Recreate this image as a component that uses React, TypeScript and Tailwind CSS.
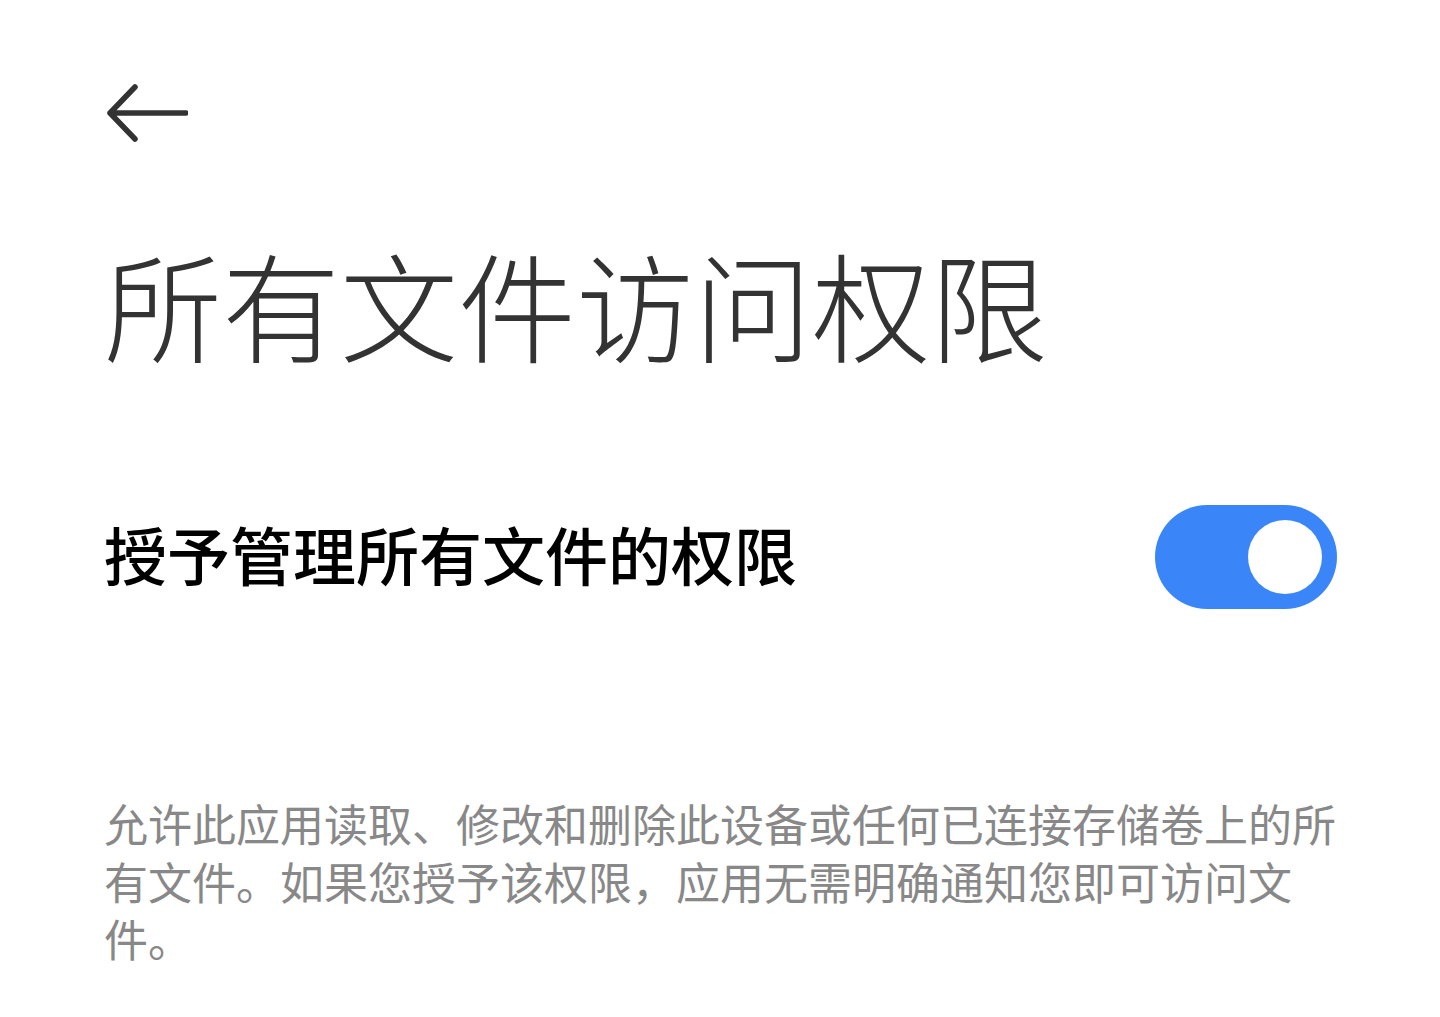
import { useState } from "react";

const FONT = '"Noto Sans CJK SC", "Noto Sans", sans-serif';

const DESCRIPTION =
  "允许此应用读取、修改和删除此设备或任何已连接存储卷上的所有文件。如果您授予该权限，应用无需明确通知您即可访问文件。";

function BackArrow() {
  return (
    <svg width="84" height="60" viewBox="0 0 84 60" fill="none">
      <path
        d="M31 4 L6 30 L31 56 M6 30 H82"
        stroke="#333333"
        strokeWidth="5.5"
        strokeLinecap="round"
        strokeLinejoin="round"
      />
    </svg>
  );
}

function Toggle({ on, onChange }: { on: boolean; onChange: () => void }) {
  return (
    <button
      type="button"
      onClick={onChange}
      className={`flex h-[104px] w-[182px] shrink-0 items-center rounded-full px-[15px] ${
        on ? "justify-end bg-[#3a86f8]" : "justify-start bg-[#d6d6d6]"
      }`}
    >
      <span className="block h-[74px] w-[74px] rounded-full bg-white" />
    </button>
  );
}

export default function App() {
  const [granted, setGranted] = useState(true);

  return (
    <div
      className="min-h-[1017px] w-[1440px] bg-white pl-[104px] pr-[103px]"
      style={{ fontFamily: FONT }}
    >
      <div className="pt-[83px]">
        <BackArrow />
      </div>

      <h1 className="mt-[101px] text-[118px] font-light leading-none text-[#333333]">
        所有文件访问权限
      </h1>

      <div className="mt-[143px] flex items-center justify-between">
        <span className="pb-[10px] text-[63px] font-medium leading-none text-black">
          授予管理所有文件的权限
        </span>
        <Toggle on={granted} onChange={() => setGranted((v) => !v)} />
      </div>

      <p className="mt-[186px] text-[44px] leading-[57.5px] text-[#888888]">
        {DESCRIPTION}
      </p>
    </div>
  );
}
